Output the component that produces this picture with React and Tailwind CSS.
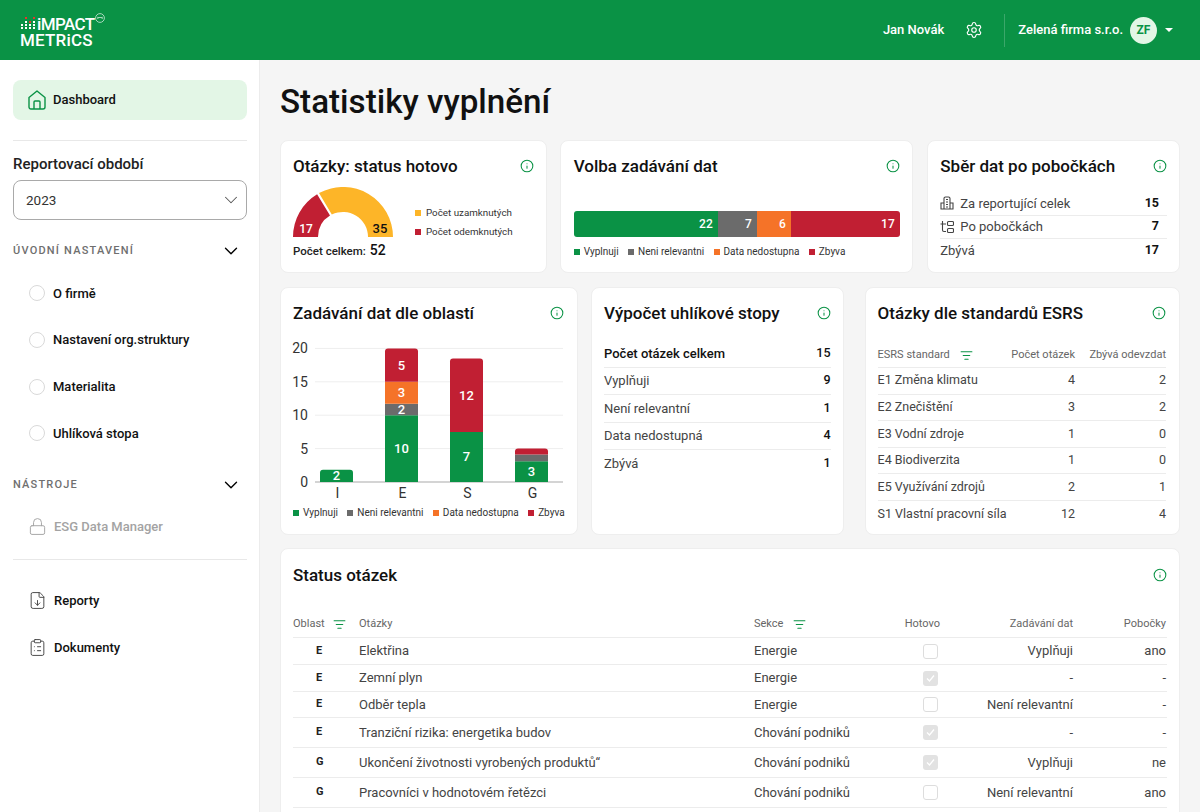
import { ChevronDown, ClipboardList, FileDown, Info, ListFilter, Lock, Settings } from "lucide-react";

const GREEN = "#0a9245";
const GREY = "#6b6b6b";
const ORANGE = "#f57328";
const RED = "#c11f33";

const font = { fontFamily: "Roboto, 'Noto Sans', sans-serif" };

function HomeIcon() {
  return (
    <svg width="18" height="20" viewBox="0 0 18 20" fill="none" stroke={GREEN} strokeWidth="1.4" strokeLinejoin="round">
      <path d="M1 7.5 9 1l8 6.5V17a2 2 0 0 1-2 2H3a2 2 0 0 1-2-2Z" />
      <path d="M6 19v-7a1 1 0 0 1 1-1h4a1 1 0 0 1 1 1v7" />
    </svg>
  );
}

function Logo() {
  const dots = [
    [5, 0, 1], [13, 0, 1], [9, 4, 1], [5, 4, 0], [13, 4, 0],
    [1, 7, 0], [5, 7, 0], [9, 7, 0], [13, 7, 0],
    [1, 10, 0], [5, 10, 0], [9, 10, 0], [13, 10, 0],
  ];
  return (
    <div className="relative pl-[20px] pt-[4px]">
      <div className="flex items-end leading-[16px] text-[17px] font-medium text-white tracking-[-0.6px]">
        <svg width="15" height="13" viewBox="0 0 15 13" className="mb-[2px] mr-[2px] shrink-0">
          {dots.map(([x, y, red]) => (
            <rect key={`${x}-${y}`} x={x} y={y} width="2" height="2" fill={red ? "#e5352f" : "#ffffff"} />
          ))}
        </svg>
        <span>iMPACT</span>
      </div>
      <div className="leading-[16px] text-[17px] font-medium text-white tracking-[0.2px]">METRiCS</div>
      <svg width="10" height="10" viewBox="0 0 10 10" fill="none" stroke="#ffffff" strokeWidth="0.8" className="absolute left-[95px] top-[1px] opacity-80">
        <circle cx="5" cy="5" r="4.4" />
        <path d="M2.8 6V4l1.2 1 1-1 1 1 1.2-1v2" />
      </svg>
    </div>
  );
}

function Header() {
  return (
    <header className="h-[60px] bg-[#0a9245] flex items-center justify-between pr-[27px] text-white">
      <Logo />
      <div className="flex items-center text-[13px] font-medium">
        <span>Jan Novák</span>
        <Settings size={18} strokeWidth={1.5} className="ml-[21px]" />
        <div className="w-px h-[33px] bg-white/20 ml-[21px] mr-[13px]" />
        <span>Zelená firma s.r.o.</span>
        <div className="ml-[7px] w-[27px] h-[27px] rounded-full bg-[#e3f6e6] text-[#0a9245] text-[12px] font-bold flex items-center justify-center">ZF</div>
        <div className="ml-[8px] w-0 h-0 border-x-[4px] border-x-transparent border-t-[4px] border-t-white" />
      </div>
    </header>
  );
}

function SectionHead({ label }) {
  return (
    <div className="flex items-center justify-between pr-[5px]">
      <span className="text-[11px] font-medium tracking-[1.2px] text-[#6f6f6f]">{label}</span>
      <ChevronDown size={22} strokeWidth={1.5} className="text-black" />
    </div>
  );
}

function StepItem({ label }) {
  return (
    <div className="h-[46.7px] flex items-center pl-[16px] gap-[8px] text-[13px] font-medium text-[#111]">
      <span className="w-[16px] h-[16px] rounded-full border border-[#d9d9d9]" />
      {label}
    </div>
  );
}

function Sidebar() {
  return (
    <aside className="w-[260px] shrink-0 bg-white border-r border-[#ececec] pl-[13px] pr-[12px] pt-[20px]">
      <div className="h-[40px] rounded-lg bg-[#e3f6e6] flex items-center pl-[15px] gap-[7px] text-[13px] font-medium text-[#111]">
        <HomeIcon />
        Dashboard
      </div>
      <div className="h-px bg-[#e8e8e8] mt-[20px]" />
      <div className="text-[15px] font-medium text-[#222] mt-[13px] leading-[20px]">Reportovací období</div>
      <div className="mt-[6px] h-[40px] rounded-lg border border-[#a9a9a9] flex items-center justify-between pl-[12px] pr-[4px] text-[13.5px] text-[#333]">
        2023
        <ChevronDown size={22} strokeWidth={1.1} className="text-[#555]" />
      </div>
      <div className="mt-[20px]"><SectionHead label="ÚVODNÍ NASTAVENÍ" /></div>
      <div className="mt-[8px]">
        {["O firmě", "Nastavení org.struktury", "Materialita", "Uhlíková stopa"].map((s) => (
          <StepItem key={s} label={s} />
        ))}
      </div>
      <div className="mt-[17px]"><SectionHead label="NÁSTROJE" /></div>
      <div className="h-[40px] mt-[11px] flex items-center pl-[15px] gap-[7px] text-[13px] font-medium text-[#a3a3a3]">
        <Lock size={19} strokeWidth={1.2} />
        ESG Data Manager
      </div>
      <div className="h-px bg-[#e8e8e8] mt-[12px]" />
      <div className="mt-[21px] h-[40px] flex items-center pl-[15px] gap-[7px] text-[13px] font-medium text-[#111]">
        <FileDown size={19} strokeWidth={1.2} className="text-[#444]" />
        Reporty
      </div>
      <div className="mt-[7px] h-[40px] flex items-center pl-[15px] gap-[7px] text-[13px] font-medium text-[#111]">
        <ClipboardList size={19} strokeWidth={1.2} className="text-[#444]" />
        Dokumenty
      </div>
    </aside>
  );
}

function Card({ title, className, children }) {
  return (
    <section className={`bg-white rounded-lg border border-[#eeeeee] px-[12px] ${className}`}>
      <div className="flex items-center justify-between pt-[14px]">
        <h2 className="text-[17px] font-medium leading-[22px] text-[#111]">{title}</h2>
        <Info size={14} strokeWidth={1.8} className="text-[#0a9245]" />
      </div>
      {children}
    </section>
  );
}

function Gauge() {
  // 17 z 52 = 58.8° od levého okraje
  return (
    <svg width="100" height="51" viewBox="0 0 100 51" className="shrink-0">
      <path d="M0 50A50 50 0 0 1 24.1 7.2L37 28.6A25 25 0 0 0 25 50Z" fill={RED} />
      <path d="M26 6.1A50 50 0 0 1 100 50H75A25 25 0 0 0 38.8 27.6Z" fill="#fdb528" />
      <text x="13" y="46" textAnchor="middle" fontSize="12" fontWeight="500" fill="#fff">17</text>
      <text x="87" y="46" textAnchor="middle" fontSize="13" fontWeight="500" fill="#111">35</text>
    </svg>
  );
}

function StatusCard() {
  return (
    <Card title="Otázky: status hotovo" className="w-[267px] h-[133px]">
      <div className="flex mt-[10px]">
        <Gauge />
        <div className="ml-[22px] mt-[20px] text-[9.8px] text-[#333] flex flex-col gap-[8px]">
          <div className="flex items-center gap-[5px] leading-[11px]"><span className="w-[6px] h-[6px] bg-[#fdb528]" />Počet uzamknutých</div>
          <div className="flex items-center gap-[5px] leading-[11px]"><span className="w-[6px] h-[6px] bg-[#c11f33]" />Počet odemknutých</div>
        </div>
      </div>
      <div className="flex items-baseline gap-[4px] mt-[2px] text-[11.5px] font-medium text-[#222]">
        Počet celkem: <span className="text-[14px] text-[#111]">52</span>
      </div>
    </Card>
  );
}

const legend = [
  ["Vyplnuji", GREEN],
  ["Neni relevantni", GREY],
  ["Data nedostupna", ORANGE],
  ["Zbyva", RED],
];

function Legend({ className = "" }) {
  return (
    <div className={`flex whitespace-nowrap text-[10px] leading-[12px] text-[#333] gap-[9.4px] ${className}`}>
      {legend.map(([label, color]) => (
        <div key={label} className="flex items-center gap-[4px]">
          <span className="w-[6px] h-[6px] shrink-0" style={{ background: color }} />
          {label}
        </div>
      ))}
    </div>
  );
}

function InputChoiceCard() {
  const parts = [
    [22, GREEN, "w-[144px]"], [7, GREY, "w-[39px]"], [6, ORANGE, "w-[34px]"], [17, RED, "w-[109px]"],
  ];
  return (
    <Card title="Volba zadávání dat" className="w-[354px] h-[133px] ml-[13px] pl-[13px]">
      <div className="flex h-[26px] mt-[34px] rounded-[3px] overflow-hidden">
        {parts.map(([n, color, width]) => (
          <div
            key={color}
            className={`${width} flex items-center justify-end pr-[5px] text-white text-[12px] font-medium`}
            style={{ background: color }}
          >
            {n}
          </div>
        ))}
      </div>
      <Legend className="mt-[9px]" />
    </Card>
  );
}

function BuildingIcon() {
  return (
    <svg width="14" height="14" viewBox="0 0 14 14" fill="none" stroke="#444" strokeWidth="1.1">
      <path d="M4 13V2.5A1.5 1.5 0 0 1 5.5 1h3A1.5 1.5 0 0 1 10 2.5V13M1 13V7h3M13 13V7h-3M0.5 13h13M6 3.5h2M6 6h2M6 8.5h2M6 11h2" />
    </svg>
  );
}

function BranchIcon() {
  return (
    <svg width="14" height="14" viewBox="0 0 14 14" fill="none" stroke="#444" strokeWidth="1.1">
      <path d="M2.5 1v9a1.5 1.5 0 0 0 1.5 1.5h2M0.5 4H6" />
      <rect x="7.5" y="1.5" width="6" height="4" rx="1" />
      <rect x="7.5" y="8.5" width="6" height="4" rx="1" />
    </svg>
  );
}

function BranchCard() {
  const rows = [
    ["Za reportující celek", 15, <BuildingIcon key="b" />],
    ["Po pobočkách", 7, <BranchIcon key="p" />],
    ["Zbývá", 17, null],
  ];
  return (
    <Card title="Sběr dat po pobočkách" className="w-[253px] h-[133px] ml-[14px]">
      <div className="mt-[15px]">
        {rows.map(([label, value, icon], i) => (
          <div key={label} className={`h-[23.5px] flex items-center justify-between pr-[8px] text-[13px] text-[#444] ${i < 2 ? "border-b border-[#ececec]" : ""}`}>
            <span className="flex items-center gap-[6px]">{icon}{label}</span>
            <span className="font-bold text-[#111] text-[12.5px]">{value}</span>
          </div>
        ))}
      </div>
    </Card>
  );
}

function AreaChart() {
  const bars = [
    { x: 40, name: "I", parts: [[1.85, GREEN, 2]] },
    { x: 105, name: "E", parts: [[10, GREEN, 10], [1.7, GREY, 2], [3.3, ORANGE, 3], [5, RED, 5]] },
    { x: 170, name: "S", parts: [[7.5, GREEN, 7], [11, RED, 12]] },
    { x: 235, name: "G", parts: [[3.1, GREEN, 3], [1, GREY, null], [0.9, RED, null]] },
  ];
  const unit = 6.68;
  const base = 158;
  return (
    <svg width="284" height="183" viewBox="0 0 284 183" className="-ml-[13px] block">
      {[0, 5, 10, 15, 20].map((v) => (
        <g key={v}>
          <line x1="35" x2="283" y1={base - v * unit} y2={base - v * unit} stroke={v === 0 ? "#aaaaaa" : "#eeeeee"} strokeWidth={v === 0 ? 1.2 : 1} />
          <text x="28" y={base - v * unit + 5} textAnchor="end" fontSize="14" fill="#333">{v}</text>
        </g>
      ))}
      {bars.map((bar) => {
        let top = base;
        return (
          <g key={bar.name}>
            {bar.parts.map(([h, color, label], i) => {
              const height = h * unit;
              top -= height;
              const isLast = i === bar.parts.length - 1;
              const y = top;
              return (
                <g key={i}>
                  <path
                    d={isLast
                      ? `M${bar.x} ${y + height}V${y + 3}q0-3 3-3h27q3 0 3 3V${y + height}Z`
                      : `M${bar.x} ${y + height}V${y}h33V${y + height}Z`}
                    fill={color}
                  />
                  {label && (
                    <text x={bar.x + 16.5} y={y + height / 2 + 4.5} textAnchor="middle" fontSize="13" fontWeight="500" fill="#fff">{label}</text>
                  )}
                </g>
              );
            })}
            <text x={bar.x + 17.5} y={base + 16} textAnchor="middle" fontSize="14" fill="#333">{bar.name}</text>
          </g>
        );
      })}
    </svg>
  );
}

function AreaCard() {
  return (
    <Card title="Zadávání dat dle oblastí" className="w-[298px] h-[248px] pr-[13px]">
      <AreaChart />
      <Legend />
    </Card>
  );
}

function CarbonCard() {
  const rows = [
    ["Počet otázek celkem", 15, true],
    ["Vyplňuji", 9],
    ["Není relevantní", 1],
    ["Data nedostupná", 4],
    ["Zbývá", 1],
  ];
  return (
    <Card title="Výpočet uhlíkové stopy" className="w-[253px] h-[248px] ml-[13px]">
      <div className="mt-[16px]">
        {rows.map(([label, value, strong], i) => (
          <div
            key={label}
            className={`h-[27.5px] flex items-center justify-between text-[13px] ${strong ? "font-medium text-[#111]" : "text-[#444]"} ${i < 4 ? "border-b border-[#ececec]" : ""}`}
          >
            {label}
            <span className="font-medium text-[12.5px] text-[#111]">{value}</span>
          </div>
        ))}
      </div>
    </Card>
  );
}

function EsrsCard() {
  const rows = [
    ["E1 Změna klimatu", 4, 2],
    ["E2 Znečištění", 3, 2],
    ["E3 Vodní zdroje", 1, 0],
    ["E4 Biodiverzita", 1, 0],
    ["E5 Využívání zdrojů", 2, 1],
    ["S1 Vlastní pracovní síla", 12, 4],
  ];
  return (
    <Card title="Otázky dle standardů ESRS" className="w-[316px] h-[248px] ml-[21px] pr-[13px]">
      <div className="mt-[19px] h-[25px] flex items-center text-[11px] text-[#666] border-b border-[#ececec]">
        <span className="flex-1 flex items-center gap-[10px]">ESRS standard <ListFilter size={13} strokeWidth={2} className="text-[#0a9245]" /></span>
        <span className="w-[80px] text-right">Počet otázek</span>
        <span className="w-[91px] text-right">Zbývá odevzdat</span>
      </div>
      {rows.map(([name, count, left], i) => (
        <div key={name} className={`h-[26.6px] flex items-center text-[12.5px] text-[#444] ${i < 5 ? "border-b border-[#ececec]" : ""}`}>
          <span className="flex-1 whitespace-nowrap">{name}</span>
          <span className="w-[40px] text-right">{count}</span>
          <span className="w-[91px] text-right">{left}</span>
        </div>
      ))}
    </Card>
  );
}

function Check({ on }) {
  return (
    <div className={`w-[15px] h-[15px] rounded-[3px] flex items-center justify-center ${on ? "bg-[#e2e2e2]" : "border border-[#dddddd] bg-white"}`}>
      {on && (
        <svg width="9" height="9" viewBox="0 0 9 9" fill="none" stroke="#fff" strokeWidth="1.3"><path d="M1 4.5 3.5 7 8 1.5" /></svg>
      )}
    </div>
  );
}

const statusRows = [
  ["E", "Elektřina", "Energie", false, "Vyplňuji", "ano", "h-[27px]"],
  ["E", "Zemní plyn", "Energie", true, "-", "-", "h-[27px]"],
  ["E", "Odběr tepla", "Energie", false, "Není relevantní", "-", "h-[26px]"],
  ["E", "Tranziční rizika: energetika budov", "Chování podniků", true, "-", "-", "h-[30px]"],
  ["G", "Ukončení životnosti vyrobených produktů“", "Chování podniků", true, "Vyplňuji", "ne", "h-[30px]"],
  ["G", "Pracovníci v hodnotovém řetězci", "Chování podniků", false, "Není relevantní", "ano", "h-[30px]"],
];

function StatusTable() {
  return (
    <section className="bg-white rounded-lg border border-[#eeeeee] px-[12px] mt-[13px] h-[300px]">
      <div className="flex items-center justify-between pt-[15px]">
        <h2 className="text-[17px] font-medium leading-[22px] text-[#111]">Status otázek</h2>
        <Info size={14} strokeWidth={1.8} className="text-[#0a9245]" />
      </div>
      <div className="mt-[25px] h-[27px] flex items-center text-[11px] text-[#666] border-b border-[#ececec]">
        <span className="w-[66px] flex items-center gap-[8px]">Oblast <ListFilter size={13} strokeWidth={2} className="text-[#0a9245]" /></span>
        <span className="w-[395px]">Otázky</span>
        <span className="w-[130px] flex items-center gap-[10px]">Sekce <ListFilter size={13} strokeWidth={2} className="text-[#0a9245]" /></span>
        <span className="w-[56px] text-right">Hotovo</span>
        <span className="w-[133px] text-right">Zadávání dat</span>
        <span className="w-[93px] text-right">Pobočky</span>
      </div>
      {statusRows.map(([area, question, section, done, input, branch, height]) => (
        <div key={question} className={`${height} flex items-center text-[13px] text-[#444] border-b border-[#ececec]`}>
          <span className="w-[66px] pl-[23px] text-[11px] font-bold text-[#222]">{area}</span>
          <span className="w-[395px]">{question}</span>
          <span className="w-[130px]">{section}</span>
          <span className="w-[56px] flex justify-end pr-[2px]"><Check on={done} /></span>
          <span className="w-[133px] text-right">{input}</span>
          <span className="w-[93px] text-right">{branch}</span>
        </div>
      ))}
    </section>
  );
}

export default function App() {
  return (
    <div className="h-[812px] overflow-hidden bg-[#f5f5f5]" style={font}>
      <Header />
      <div className="flex h-[752px]">
        <Sidebar />
        <main className="flex-1 px-[20px] overflow-hidden">
          <h1 className="text-[33.2px] font-medium leading-[40px] text-[#111] mt-[22px]">Statistiky vyplnění</h1>
          <div className="flex mt-[18px]">
            <StatusCard />
            <InputChoiceCard />
            <BranchCard />
          </div>
          <div className="flex mt-[14px]">
            <AreaCard />
            <CarbonCard />
            <EsrsCard />
          </div>
          <StatusTable />
        </main>
      </div>
    </div>
  );
}
